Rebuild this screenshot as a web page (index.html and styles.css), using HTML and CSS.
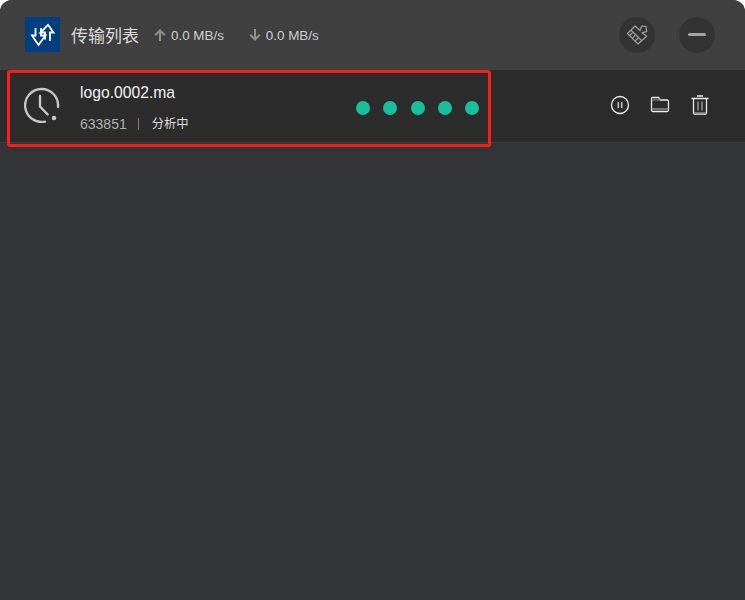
FILE: index.html
```html
<!DOCTYPE html>
<html lang="zh">
<head>
<meta charset="utf-8">
<title>传输列表</title>
<link rel="stylesheet" href="styles.css">
</head>
<body>
<div class="window">
  <header class="header">
    <div class="logo">
      <svg width="35" height="35" viewBox="0 0 35 35" fill="none" stroke="#fff" stroke-width="1.800" stroke-linejoin="miter">
        <path d="M20 22.500V15.500H15.500L23 7.800L28.500 15.500H25V24"/>
        <path d="M10.500 11V18.500H7L13.500 28L20.500 18.500H16V11"/>
      </svg>
    </div>
    <span class="title">传输列表</span>
    <span class="speed up">
      <svg class="arrow" width="12" height="12" viewBox="0 0 12 12" fill="none" stroke="#8f8f8f" stroke-width="2"><path d="M6 12V1.500M1.200 6.300L6 1.500 10.800 6.300"/></svg>
      0.0 MB/s
    </span>
    <span class="speed down">
      <svg class="arrow" width="12" height="12" viewBox="0 0 12 12" fill="none" stroke="#8f8f8f" stroke-width="2"><path d="M6 0v10.500M1.200 5.700L6 10.500 10.800 5.700"/></svg>
      0.0 MB/s
    </span>
    <div class="header-actions">
      <button class="round-btn">
        <svg width="22" height="22" viewBox="0 0 22 22" fill="none" stroke="#a0a0a0" stroke-width="1.200" stroke-linejoin="round">
          <path d="M1.500 9.500L9 2l5 4.500L15.700 2l4.300.7.700 5-4.700 1 4.700 3.500L12 20z"/>
          <path d="M5 6.200L15.500 16.500"/>
          <path d="M3.800 11.500l2.600-2.600M6.500 14l2.600-2.600M9.200 16.800l2.800-2.800"/>
        </svg>
      </button>
      <button class="round-btn">
        <span class="minus"></span>
      </button>
    </div>
  </header>
  <section class="row">
    <svg class="clock" width="36" height="36" viewBox="0 0 36 36" fill="none" stroke="#c6c6c6" stroke-width="2.400" stroke-linecap="round">
      <path d="M21 34.600A16.500 16.500 0 1 1 34 20"/>
      <path d="M16 9V19.500l7.700 8"/>
      <circle cx="30" cy="31" r="2.300" fill="#c6c6c6" stroke="none"/>
    </svg>
    <div class="info">
      <div class="name">logo.0002.ma</div>
      <div class="meta"><span class="size">633851</span><span class="sep"></span><span class="status">分析中</span></div>
    </div>
    <div class="dots"><i></i><i></i><i></i><i></i><i></i></div>
    <div class="actions">
      <svg width="20" height="20" viewBox="0 0 20 20" fill="none" stroke="#ececec" stroke-width="1.300"><circle cx="10" cy="10" r="8.500"/><path d="M8.300 7v6M11.700 7v6" stroke="#c4c4c4" stroke-width="1.500"/></svg>
      <svg width="20" height="20" viewBox="0 0 20 20" fill="none" stroke="#ececec" stroke-width="1.300"><path d="M1.500 16V3.500q0-1 1-1h6l2 2.500h6.500q1.500 0 1.500 1.500v8.500q0 1.500-1.500 1.500h-14q-1.500 0-1.500-1.500z"/><path d="M1.500 14h17" stroke="#8e8e8e" stroke-width="1.500"/><path d="M9 3l1.500 2H1.500" stroke="#9a9a9a" stroke-width="1"/></svg>
      <svg width="20" height="20" viewBox="0 0 20 20" fill="none" stroke="#ececec" stroke-width="1.300"><path d="M1.500 3.500h17M7 1h6"/><path d="M3.500 4v14q0 1 1 1h11q1 0 1-1V4"/><path d="M8 6.500v9M12 6.500v9" stroke="#a8a8a8"/><path d="M4 18h12" stroke="#8e8e8e" stroke-width="1.500"/></svg>
    </div>
  </section>
  <div class="highlight"></div>
</div>
</body>
</html>
```
FILE: styles.css
```css
* { box-sizing: border-box; }
html, body { margin: 0; height: 100%; background: #fff; }
body { font-family: "Liberation Sans", "Noto Sans CJK SC", sans-serif; }
.window {
  position: relative;
  width: 745px;
  height: 600px;
  background: #333436;
  border-radius: 12px 12px 0 0;
  overflow: hidden;
}
.header {
  display: flex;
  align-items: center;
  height: 70px;
  padding: 0 30px 1px 25px;
  background: #404040;
}
.logo {
  width: 35px;
  height: 35px;
  background: #003f7f;
  display: flex;
  align-items: center;
  justify-content: center;
}
.title { margin-left: 11px; margin-top: -1px; font-size: 17px; color: #dcdcdc; }
.speed {
  display: flex;
  align-items: center;
  gap: 5px;
  font-size: 13.400px;
  color: #cfcfcf;
  margin-top: 1px;
}
.up { margin-left: 15px; }
.down { margin-left: 25px; }
.header-actions { display: flex; gap: 24px; margin-left: auto; }
.round-btn {
  width: 36px;
  height: 36px;
  padding: 0;
  border: 0;
  border-radius: 50%;
  background: #333333;
  display: flex;
  align-items: center;
  justify-content: center;
}
.minus { width: 18px; height: 3px; border-radius: 2px; background: #a3a3a3; }
.row {
  display: flex;
  align-items: center;
  height: 73px;
  padding: 0 35px 2px 24px;
  background: #2c2c2c;
  border-bottom: 1px solid #3b3b3b;
}
.clock { flex: none; }
.info { margin-left: 20px; margin-top: 5px; }
.name { font-size: 15.700px; line-height: 18px; color: #f2f2f2; }
.meta { display: flex; align-items: center; margin-top: 14px; font-size: 14px; line-height: 16px; }
.size { color: #b0b0b0; }
.sep { width: 1px; height: 12px; margin: 0 13px 0 11px; background: #8a7a72; }
.status { font-size: 12.300px; color: #dddddd; }
.dots { display: flex; gap: 13.250px; margin-left: auto; margin-top: 6px; }
.dots i { display: block; width: 14px; height: 14px; border-radius: 50%; background: #17bf9a; }
.actions { display: flex; gap: 20px; margin-left: 131px; }
.highlight {
  position: absolute;
  left: 7px;
  top: 70px;
  width: 484px;
  height: 77px;
  border: 3px solid #fa1e14;
  border-radius: 3px;
}
```
